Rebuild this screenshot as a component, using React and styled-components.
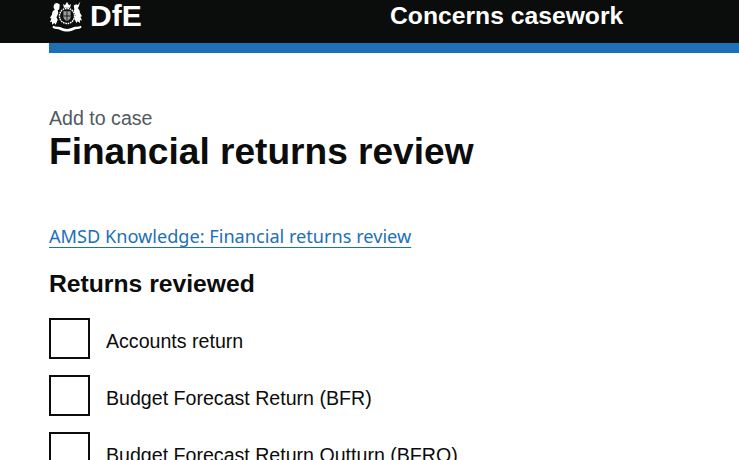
import React from "react";
import styled, { createGlobalStyle } from "styled-components";

const GlobalStyle = createGlobalStyle`
  html, body {
    margin: 0;
    background: #fff;
    color: #0b0c0c;
    font-family: "Liberation Sans", Arial, sans-serif;
    overflow: hidden;
  }
`;

const Header = styled.header`
  height: 43px;
  background: #0b0c0c;
  color: #fff;
  padding-left: 49px;
  display: flex;
  overflow: hidden;
`;

const Logo = styled.div`
  width: 341px;
  height: 32px;
  display: flex;
  align-items: center;
  gap: 5px;
`;

const LogoText = styled.span`
  font-size: 30px;
  font-weight: 700;
  line-height: 32px;
`;

const ServiceName = styled.span`
  font-size: 24.7px;
  font-weight: 700;
  line-height: 32px;
`;

const BlueBar = styled.div`
  height: 10px;
  margin-left: 49px;
  background: #1d70b8;
`;

const Main = styled.main`
  padding: 55px 0 0 49px;
`;

const Caption = styled.span`
  display: block;
  font-size: 19.6px;
  line-height: 21px;
  color: #505a5f;
`;

const Title = styled.h1`
  margin: 0;
  font-size: 37.1px;
  line-height: 44px;
  font-weight: 700;
`;

const KnowledgeLink = styled.a`
  display: inline-block;
  margin-top: 51px;
  font-family: "Noto Sans", sans-serif;
  font-size: 18.15px;
  line-height: 24px;
  color: #1d70b8;
  text-decoration: underline;
  text-decoration-thickness: 1px;
  text-underline-offset: 4px;
`;

const Legend = styled.h2`
  margin: 21px 0 0;
  font-size: 24.7px;
  line-height: 30px;
  font-weight: 700;
`;

const CheckList = styled.div`
  margin-top: 19px;
  display: flex;
  flex-direction: column;
  gap: 16px;
`;

const CheckRow = styled.label`
  display: flex;
  align-items: flex-start;
  gap: 16px;
  font-size: 19.6px;
  line-height: 25px;
`;

const Box = styled.span`
  flex: none;
  width: 41px;
  height: 41px;
  box-sizing: border-box;
  border: 2px solid #0b0c0c;
`;

const CheckText = styled.span`
  padding-top: 11px;
`;

const Crest = () => (
  <svg width="36" height="31" viewBox="0 0 34 30" fill="#fff" aria-hidden="true">
    {/* crown */}
    <path d="M14 6.500l-.8-3.500 1.800 1.200L17 1l2 3.200L20.800 3 20 6.500z" />
    {/* garter and shield */}
    <circle cx="17" cy="14.500" r="7.300" fill="none" stroke="#fff" strokeWidth="1.400" strokeDasharray="1.600 .7" />
    <path d="M13.500 10h7v5.500c0 2-2 3.200-3.500 4-1.500-.8-3.500-2-3.500-4z" fill="#9a9a9a" />
    <path d="M17 10v9.500M13.500 14.500h7" stroke="#0b0c0c" strokeWidth=".8" />
    {/* lion */}
    <path d="M7.500 2C5.500 2 4 3.500 4 5.500c0 1.200.6 2.100 1.300 2.700C3.200 9.200 2.500 11 2.500 13L.5 16.500l1.500.5L.5 20.500l2-.5v3l2.200-1.800 1.300 1.800 2-4.500-1.200-2.800 1.700-3.500-.4-3.200L9.500 8 10 3.500z" />
    {/* unicorn */}
    <path d="M30 .5l-2.600 3.300c-1.500-.6-3-.3-3.900.7l.6 3.500-.6 2.500 1.700 3.500-1.200 2.800 2 4.500 1.300-1.800 2.200 1.800v-3l2 .5-1.500-3.500 1.500-.5-2-3.500c0-2-.8-3.600-2.200-4.600.9-.7 1.500-1.700 1.500-2.900z" />
    {/* motto ribbon */}
    <path d="M3.500 24c3 1.500 5 .5 7.500 1.500s4 1.500 6 1.500 3.500-.5 6-1.500 4.500 0 7.500-1.500l.5 2c-3 1.800-5 1-7.500 2s-4.500 1.500-6.500 1.500-4-.5-6.500-1.500-4.500-.2-7.500-2z" />
  </svg>
);

const returnsList = [
  "Accounts return",
  "Budget Forecast Return (BFR)",
  "Budget Forecast Return Outturn (BFRO)",
];

export default function App() {
  return (
    <>
      <GlobalStyle />
      <Header>
        <Logo>
          <Crest />
          <LogoText>DfE</LogoText>
        </Logo>
        <ServiceName>Concerns casework</ServiceName>
      </Header>
      <BlueBar />
      <Main>
        <Caption>Add to case</Caption>
        <Title>Financial returns review</Title>
        <KnowledgeLink href="#">AMSD Knowledge: Financial returns review</KnowledgeLink>
        <Legend>Returns reviewed</Legend>
        <CheckList>
          {returnsList.map((item) => (
            <CheckRow key={item}>
              <Box />
              <CheckText>{item}</CheckText>
            </CheckRow>
          ))}
        </CheckList>
      </Main>
    </>
  );
}
